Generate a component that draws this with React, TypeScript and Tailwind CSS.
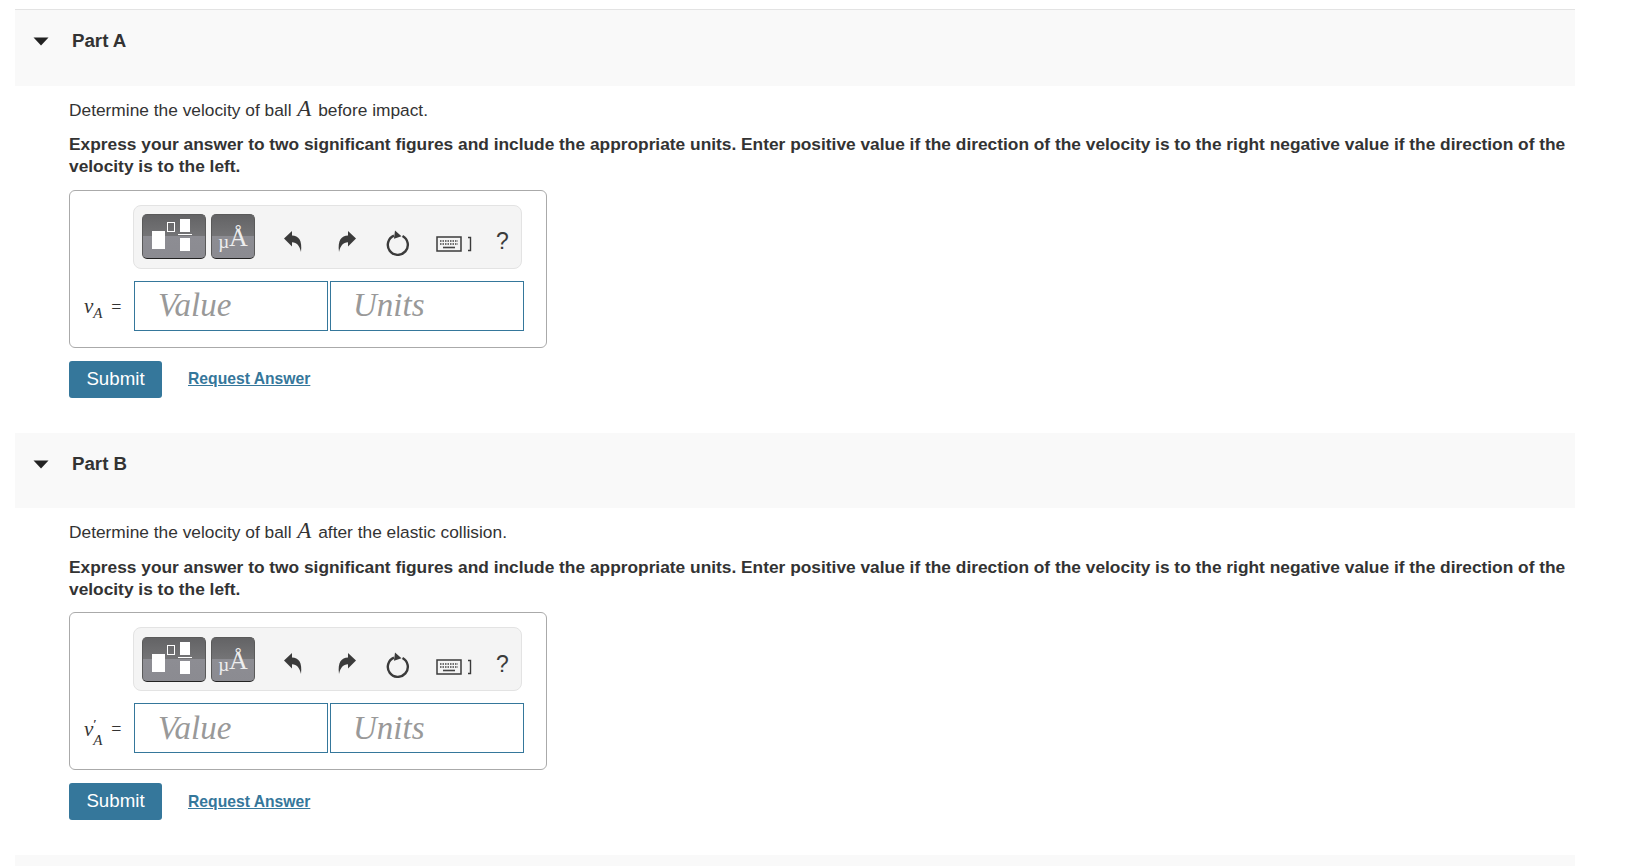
function MathA() {
  return <span className="font-['Liberation_Serif',serif] italic text-[23px] leading-[0] ml-[1px] mr-[2px]">A</span>
}

function MathLabel({ prime }: { prime?: boolean }) {
  return (
    <div className="absolute left-[-50px] top-[13px] h-[26px] flex items-center text-[#333] font-['Liberation_Serif',serif]">
      <i className="text-[21px] leading-none">v</i>
      {prime ? (
        <div className="flex flex-col w-[11px] mt-[10px]">
          <div className="h-[6px] mb-[5.5px] text-[12px] leading-[6px] font-bold">′</div>
          <i className="h-[14px] text-[15px] leading-[14px]">A</i>
        </div>
      ) : (
        <div className="flex flex-col w-[11px]">
          <div className="h-[13px]" />
          <i className="h-[14px] text-[15px] leading-[14px]">A</i>
        </div>
      )}
      <span className="ml-[7px] text-[18px] leading-none">=</span>
    </div>
  )
}

function ToolbarIcons() {
  return (
    <>
      <svg width="20" height="24" viewBox="0 0 20 24" className="ml-[28px] mt-[10px]">
        <path d="M1 8.5 L9 1 V5.5 C15.5 5.8 19.5 10 18 22 C16.5 15.5 14 12.5 9 12.2 V16.5 Z" fill="#3b3b3b" />
      </svg>
      <svg width="20" height="24" viewBox="0 0 20 24" className="ml-[34px] mt-[10px]">
        <path d="M19 8.5 L11 1 V5.5 C4.5 5.8 0.5 10 2 22 C3.5 15.5 6 12.5 11 12.2 V16.5 Z" fill="#3b3b3b" />
      </svg>
      <svg width="24" height="26" viewBox="0 0 24 26" className="ml-[29px] mt-[12px]">
        <path d="M8 5.6 A10 10 0 1 0 16.5 6" fill="none" stroke="#3b3b3b" strokeWidth="2.4" />
        <path d="M9 0.5 L15.5 6.2 L8 8.8 Z" fill="#3b3b3b" />
      </svg>
      <svg width="36" height="18" viewBox="0 0 36 18" className="ml-[26px] mt-[15px]">
        <rect x="1" y="2" width="24" height="14" fill="#f4f4f4" stroke="#3b3b3b" strokeWidth="1.5" />
        <path d="M4 6 H22 M4 9 H22" stroke="#444" strokeWidth="1.6" strokeDasharray="1.5 1" />
        <path d="M7 12.5 H19" stroke="#444" strokeWidth="1.6" />
        <path d="M32 2.5 H34.5 V15.5 H32" fill="none" stroke="#3b3b3b" strokeWidth="1.4" />
      </svg>
      <span className="ml-[24px] mt-[10px] text-[23px] leading-none text-[#3b3b3b] font-['Liberation_Sans',sans-serif]">?</span>
    </>
  )
}

function AnswerBox({ prime }: { prime?: boolean }) {
  return (
    <div className="w-[478px] h-[158px] border border-[#aaaaaa] rounded-[6px] pt-[14px] pl-[63px]">
      <div className="w-[389px] h-[64px] bg-[#f4f4f4] border border-[#e3e3e3] rounded-[8px] flex items-center pl-[8px]">
        <div className="w-[64px] h-[45px] rounded-[5px] border border-[#5a5a5a] border-b-[#222] bg-[linear-gradient(#636365_0%,#747476_48%,#8d8d93_50%,#8b8b91_100%)] relative mr-[5px]">
          <div className="absolute left-[9px] top-[16px] w-[13px] h-[18px] bg-white" />
          <div className="absolute left-[24px] top-[7px] w-[8px] h-[10px] border border-white" />
          <div className="absolute left-[37px] top-[4px] w-[10px] h-[13px] bg-white" />
          <div className="absolute left-[35px] top-[19px] w-[14px] h-[1px] bg-white" />
          <div className="absolute left-[37px] top-[23px] w-[10px] h-[13px] bg-white" />
        </div>
        <div className="w-[44px] h-[45px] rounded-[5px] border border-[#5a5a5a] border-b-[#222] bg-[linear-gradient(#636365_0%,#747476_48%,#8d8d93_50%,#8b8b91_100%)] flex items-end justify-center pb-[7px] font-['Liberation_Serif',serif] leading-none text-[#eeeeee]">
          <span className="text-[19px]">µ</span>
          <span className="text-[26px]">Å</span>
        </div>
        <ToolbarIcons />
      </div>
      <div className="relative mt-[12px] ml-[1px] flex gap-[2px]">
        <MathLabel prime={prime} />
        <input
          placeholder="Value"
          className="w-[194px] h-[50px] border border-[#35779b] pl-[23px] font-['Liberation_Serif',serif] italic text-[33px] placeholder:text-[#999999] outline-none"
        />
        <input
          placeholder="Units"
          className="w-[194px] h-[50px] border border-[#35779b] pl-[22px] font-['Liberation_Serif',serif] italic text-[33px] placeholder:text-[#999999] outline-none"
        />
      </div>
    </div>
  )
}

function Part({ title, intro, prime }: { title: string; intro: string; prime?: boolean }) {
  return (
    <section>
      <div className="h-[75.5px] bg-[#f9f9f9] flex items-start pt-[21px]">
        <svg width="16" height="9" viewBox="0 0 16 9" className="ml-[18px] mt-[6px]">
          <path d="M0.5 0.5 H15.5 L8 8.5 Z" fill="#222" />
        </svg>
        <h2 className="ml-[23px] text-[18.7px] leading-[20px] font-bold text-[#333]">{title}</h2>
      </div>
      <div className="pl-[54px] pt-[12px] pb-[35px]">
        <p className="text-[17.33px] leading-[24px] text-[#333]">
          Determine the velocity of ball <MathA /> {intro}
        </p>
        <p className="mt-[11.5px] text-[17.33px] leading-[22px] font-bold text-[#333]">
          Express your answer to two significant figures and include the appropriate units. Enter positive value if the
          direction of the velocity is to the right negative value if the direction of the velocity is to the left.
        </p>
        <div className="mt-[12.5px]">
          <AnswerBox prime={prime} />
        </div>
        <div className="mt-[13px] flex items-center">
          <button className="w-[93px] h-[37px] bg-[#35779b] rounded-[3px] text-white text-[18.7px]">Submit</button>
          <a href="#" className="ml-[26px] text-[15.7px] font-bold text-[#35779b] underline">
            Request Answer
          </a>
        </div>
      </div>
    </section>
  )
}

export default function App() {
  return (
    <div className="h-[866px] overflow-hidden bg-white pt-[9px] pl-[15px] font-['Liberation_Sans',sans-serif]">
      <div className="w-[1560px] border-t border-[#e3e3e3]">
        <Part title="Part A" intro="before impact." />
        <Part title="Part B" intro="after the elastic collision." prime />
        <div className="h-[76px] bg-[#f9f9f9]" />
      </div>
    </div>
  )
}
